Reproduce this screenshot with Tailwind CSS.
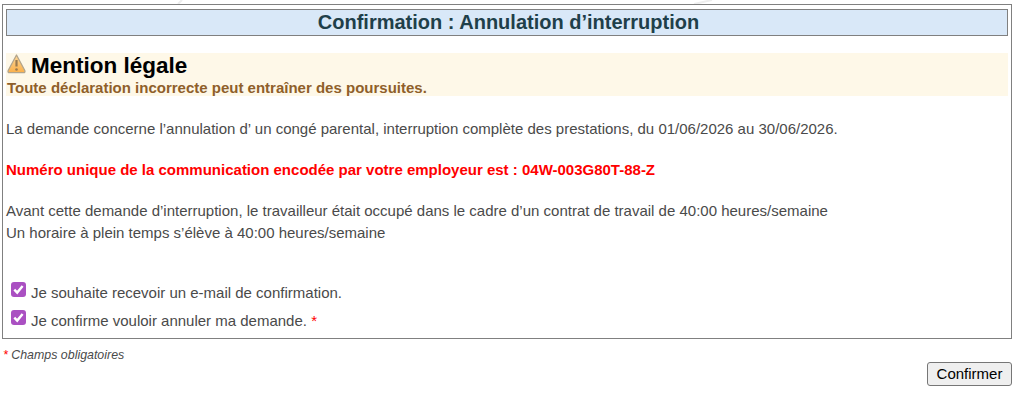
<!DOCTYPE html>
<html lang="fr">
<head>
  <meta charset="UTF-8" />
  <title>Confirmation : Annulation d’interruption</title>
  <script src="https://cdn.jsdelivr.net/npm/@tailwindcss/browser@4"></script>
</head>
<body class="relative bg-white font-['Liberation_Sans',Arial,sans-serif] text-[15px] text-[#4a4a4a] overflow-hidden">
  <!-- faint watermark traces above the box -->
  <svg class="absolute top-0 left-0 w-[1017px] h-[12px]" viewBox="0 0 1017 12">
    <path d="M182 0 L178 4" stroke="#eeeeee" stroke-width="2"/>
    <path d="M712 0 L694 4" stroke="#eeeeee" stroke-width="2"/>
  </svg>
  <div class="relative pt-1 pl-[2px] pr-[5px]">
    <div class="border border-[#808080] h-[335px] px-[3px] pt-1">
      <h1 class="border border-[#808080] bg-[#d9e8f8] h-[27px] pl-[3px] leading-[25px] text-center text-[20px] font-bold text-[#1f3f4a]">Confirmation : Annulation d’interruption</h1>

      <div class="mt-[17px] bg-[#fef8e8] h-[43px] pt-px">
        <div class="flex items-start h-[25px]">
          <svg class="w-[19px] h-[20px] ml-px mr-[5px]" viewBox="0 0 19 20">
            <defs>
              <linearGradient id="warn" x1="0" y1="0" x2="0" y2="1">
                <stop offset="0" stop-color="#fdd79a"/>
                <stop offset="1" stop-color="#fbb04a"/>
              </linearGradient>
            </defs>
            <path d="M9.5 1 L17.8 16.5 Q18.5 18.6 16.5 18.6 L2.5 18.6 Q0.5 18.6 1.2 16.5 Z" fill="url(#warn)" stroke="#b3a58c" stroke-width="1.3" stroke-linejoin="round"/>
            <path d="M9.5 6 L9.5 12.5" stroke="#9a7a50" stroke-width="2.2"/>
            <circle cx="9.5" cy="15.5" r="1.3" fill="#9a7a50"/>
          </svg>
          <h2 class="text-[22.5px] leading-[24px] font-bold text-black">Mention légale</h2>
        </div>
        <p class="pl-px font-bold text-[#8f5f2a] leading-[17px]">Toute déclaration incorrecte peut entraîner des poursuites.</p>
      </div>

      <p class="mt-[25px] leading-[16px]">La demande concerne l’annulation d’ un congé parental, interruption complète des prestations, du 01/06/2026 au 30/06/2026.</p>
      <p class="mt-[25px] leading-[16px] font-bold text-[#ff0000]">Numéro unique de la communication encodée par votre employeur est : 04W-003G80T-88-Z</p>
      <p class="mt-[22px] leading-[22px]">Avant cette demande d’interruption, le travailleur était occupé dans le cadre d’un contrat de travail de 40:00 heures/semaine<br />Un horaire à plein temps s’élève à 40:00 heures/semaine</p>

      <div class="mt-[38px] pl-[5px] flex flex-col gap-[12px]">
        <label class="flex items-start gap-[5px] h-[16px]">
          <svg class="w-[15px] h-[15px]" viewBox="0 0 15 15"><rect width="15" height="15" rx="3" fill="#aa50c2"/><path d="M3.3 7.6 L6.2 10.6 L11.6 4" fill="none" stroke="#fff" stroke-width="2.4"/></svg>
          <span class="mt-[3px] leading-[16px]">Je souhaite recevoir un e-mail de confirmation.</span>
        </label>
        <label class="flex items-start gap-[5px] h-[16px]">
          <svg class="w-[15px] h-[15px]" viewBox="0 0 15 15"><rect width="15" height="15" rx="3" fill="#aa50c2"/><path d="M3.3 7.6 L6.2 10.6 L11.6 4" fill="none" stroke="#fff" stroke-width="2.4"/></svg>
          <span class="mt-[3px] leading-[16px]">Je confirme vouloir annuler ma demande. <span class="text-[#ff0000]">*</span></span>
        </label>
      </div>
    </div>

    <p class="mt-[9px] pl-px text-[12.4px] leading-[14px] italic"><span class="text-[#ff0000]">*</span> Champs obligatoires</p>
    <div class="flex justify-end">
      <button class="h-[24px] w-[85px] border border-[#767676] rounded-[3px] bg-[#efefef] text-black text-[15px]">Confirmer</button>
    </div>
  </div>
</body>
</html>
